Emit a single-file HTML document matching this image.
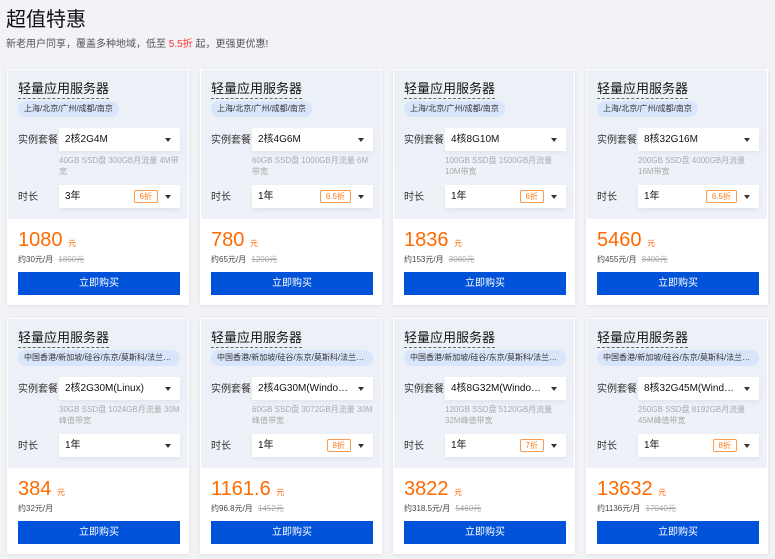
<!DOCTYPE html>
<html><head><meta charset="utf-8"><style>
*{box-sizing:border-box;margin:0;padding:0}
body{width:775px;height:559px;background:#f2f3f7;font-family:"Liberation Sans","Noto Sans CJK SC",sans-serif;position:relative;overflow:hidden;color:#222}
.h1{position:absolute;left:6px;top:3px;font-size:20px;color:#111}
.sub{position:absolute;left:6px;top:35px;font-size:10px;color:#555}
.sub b{color:#f33;font-weight:normal}
.card{position:absolute;width:182px;height:236px;background:#fff;box-shadow:0 1px 4px rgba(0,0,0,.08);border:1px solid #fff}
.top{position:absolute;left:0;top:0;width:180px;height:149px;background:linear-gradient(#ecf0f7,#eef1f8)}
.t{position:absolute;left:10px;top:10px;font-size:13px;color:#111;border-bottom:1px dashed #666;line-height:17px;padding-bottom:1px}
.tag{position:absolute;left:10px;top:31px;height:16px;line-height:16px;border-radius:8px;background:#d9e5fa;color:#333;font-size:8px;padding:0 6px;white-space:nowrap;overflow:hidden;text-overflow:ellipsis}
.lab{position:absolute;left:10px;font-size:10px;color:#333;white-space:nowrap}
.sel{position:absolute;left:51px;width:121px;height:23px;background:#fff;box-shadow:0 2px 5px rgba(0,0,0,.06);font-size:10px;line-height:23px;padding-left:6px;color:#111;white-space:nowrap}
.sel:after{content:"";position:absolute;right:9px;top:10px;border:3px solid transparent;border-top:4px solid #333}
.sel span.n{display:inline-block;max-width:92px;overflow:hidden;text-overflow:ellipsis;vertical-align:top}
.disc{position:absolute;right:22px;top:5px;height:13px;line-height:11px;border:1px solid #ff9a4d;color:#ff7a1a;font-size:8px;padding:0 5px;border-radius:2px}
.desc{position:absolute;left:51px;top:85px;width:124px;font-size:8px;line-height:11px;color:#aaa}
.pr{position:absolute;left:10px;top:159px;color:#ff6a00;font-size:20px;white-space:nowrap}
.pr small{font-size:8px}
.mo{position:absolute;left:10px;top:184px;font-size:8px;color:#444;white-space:nowrap}
.mo s{color:#aaa;margin-left:3px}
.btn{position:absolute;left:10px;top:202px;width:162px;height:23px;background:#0052d9;color:#fff;font-size:10px;text-align:center;line-height:23px}
</style></head><body>
<div class="h1">超值特惠</div>
<div class="sub">新老用户同享，覆盖多种地域，低至 <b>5.5折</b> 起，更强更优惠!</div>

<div class="card" style="left:7px;top:69px"><div class="top"></div><div class="t">轻量应用服务器</div><div class="tag">上海/北京/广州/成都/南京</div><div class="lab" style="top:61px">实例套餐</div><div class="sel" style="top:58px"><span class="n">2核2G4M</span></div><div class="desc">40GB SSD盘 300GB月流量 4M带宽</div><div class="lab" style="top:118px">时长</div><div class="sel" style="top:115px">3年<span class="disc">6折</span></div><div class="pr">1080 <small>元</small></div><div class="mo">约30元/月 <s>1800元</s></div><div class="btn">立即购买</div></div>

<div class="card" style="left:200px;top:69px"><div class="top"></div><div class="t">轻量应用服务器</div><div class="tag">上海/北京/广州/成都/南京</div><div class="lab" style="top:61px">实例套餐</div><div class="sel" style="top:58px"><span class="n">2核4G6M</span></div><div class="desc">60GB SSD盘 1000GB月流量 6M带宽</div><div class="lab" style="top:118px">时长</div><div class="sel" style="top:115px">1年<span class="disc">6.5折</span></div><div class="pr">780 <small>元</small></div><div class="mo">约65元/月 <s>1200元</s></div><div class="btn">立即购买</div></div>

<div class="card" style="left:393px;top:69px"><div class="top"></div><div class="t">轻量应用服务器</div><div class="tag">上海/北京/广州/成都/南京</div><div class="lab" style="top:61px">实例套餐</div><div class="sel" style="top:58px"><span class="n">4核8G10M</span></div><div class="desc">100GB SSD盘 1500GB月流量 10M带宽</div><div class="lab" style="top:118px">时长</div><div class="sel" style="top:115px">1年<span class="disc">6折</span></div><div class="pr">1836 <small>元</small></div><div class="mo">约153元/月 <s>3060元</s></div><div class="btn">立即购买</div></div>

<div class="card" style="left:586px;top:69px"><div class="top"></div><div class="t">轻量应用服务器</div><div class="tag">上海/北京/广州/成都/南京</div><div class="lab" style="top:61px">实例套餐</div><div class="sel" style="top:58px"><span class="n">8核32G16M</span></div><div class="desc">200GB SSD盘 4000GB月流量 16M带宽</div><div class="lab" style="top:118px">时长</div><div class="sel" style="top:115px">1年<span class="disc">6.5折</span></div><div class="pr">5460 <small>元</small></div><div class="mo">约455元/月 <s>8400元</s></div><div class="btn">立即购买</div></div>

<div class="card" style="left:7px;top:318px"><div class="top"></div><div class="t">轻量应用服务器</div><div class="tag" style="width:162px">中国香港/新加坡/硅谷/东京/莫斯科/法兰克福</div><div class="lab" style="top:61px">实例套餐</div><div class="sel" style="top:58px"><span class="n">2核2G30M(Linux)</span></div><div class="desc">30GB SSD盘 1024GB月流量 30M峰值带宽</div><div class="lab" style="top:118px">时长</div><div class="sel" style="top:115px">1年</div><div class="pr">384 <small>元</small></div><div class="mo">约32元/月</div><div class="btn">立即购买</div></div>

<div class="card" style="left:200px;top:318px"><div class="top"></div><div class="t">轻量应用服务器</div><div class="tag" style="width:162px">中国香港/新加坡/硅谷/东京/莫斯科/法兰克福</div><div class="lab" style="top:61px">实例套餐</div><div class="sel" style="top:58px"><span class="n">2核4G30M(Windows/Linux)</span></div><div class="desc">60GB SSD盘 3072GB月流量 30M峰值带宽</div><div class="lab" style="top:118px">时长</div><div class="sel" style="top:115px">1年<span class="disc">8折</span></div><div class="pr">1161.6 <small>元</small></div><div class="mo">约96.8元/月 <s>1452元</s></div><div class="btn">立即购买</div></div>

<div class="card" style="left:393px;top:318px"><div class="top"></div><div class="t">轻量应用服务器</div><div class="tag" style="width:162px">中国香港/新加坡/硅谷/东京/莫斯科/法兰克福</div><div class="lab" style="top:61px">实例套餐</div><div class="sel" style="top:58px"><span class="n">4核8G32M(Windows/Linux)</span></div><div class="desc">120GB SSD盘 5120GB月流量 32M峰值带宽</div><div class="lab" style="top:118px">时长</div><div class="sel" style="top:115px">1年<span class="disc">7折</span></div><div class="pr">3822 <small>元</small></div><div class="mo">约318.5元/月 <s>5460元</s></div><div class="btn">立即购买</div></div>

<div class="card" style="left:586px;top:318px"><div class="top"></div><div class="t">轻量应用服务器</div><div class="tag" style="width:162px">中国香港/新加坡/硅谷/东京/莫斯科/法兰克福</div><div class="lab" style="top:61px">实例套餐</div><div class="sel" style="top:58px"><span class="n">8核32G45M(Windows/Linux)</span></div><div class="desc">250GB SSD盘 8192GB月流量 45M峰值带宽</div><div class="lab" style="top:118px">时长</div><div class="sel" style="top:115px">1年<span class="disc">8折</span></div><div class="pr">13632 <small>元</small></div><div class="mo">约1136元/月 <s>17040元</s></div><div class="btn">立即购买</div></div>
</body></html>
